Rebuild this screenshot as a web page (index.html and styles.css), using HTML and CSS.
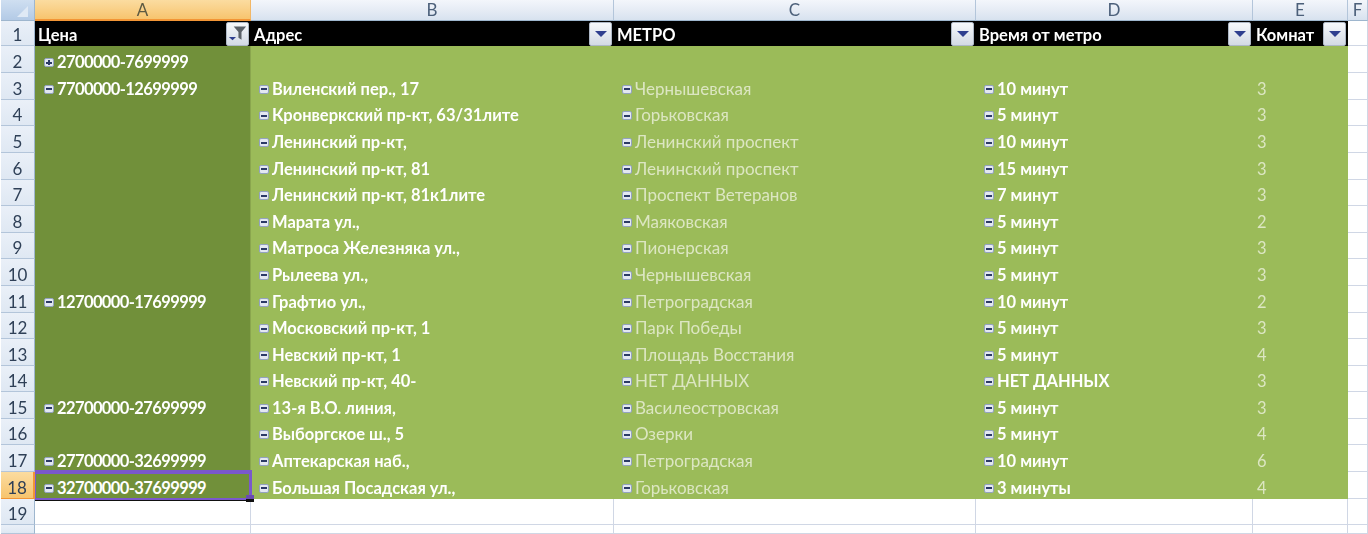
FILE: index.html
```html
<!DOCTYPE html>
<html lang="ru">
<head>
<meta charset="utf-8">
<title>Сводная таблица</title>
<link rel="stylesheet" href="styles.css">
</head>
<body>
<div class="sheet">
  <div class="corner"><span class="corner-mark"></span></div>
  <div class="col active">A</div><div class="col">B</div><div class="col">C</div><div class="col">D</div><div class="col">E</div><div class="col">F</div>

  <div class="rownum">1</div>
  <div class="head"><span>Цена</span><button class="filter"><svg viewBox="0 0 22 23" width="22" height="23"><path d="M2 14h7.500l-3.750 3.500z" fill="#2f3f8f"/><path d="M7 3h13l-4.800 5.800v8.200l-3.200-2v-6.200z" fill="#5a6068"/></svg></button></div>
  <div class="head"><span>Адрес</span><button class="filter"><i class="arrow"></i></button></div>
  <div class="head"><span>МЕТРО</span><button class="filter"><i class="arrow"></i></button></div>
  <div class="head"><span>Время от метро</span><button class="filter"><i class="arrow"></i></button></div>
  <div class="head"><span>Комнат</span><button class="filter"><i class="arrow"></i></button></div>
  <div class="blank"></div>

  <div class="rownum">2</div>
  <div class="price"><i class="tog plus"></i>2700000-7699999</div><div class="addr"></div><div class="metro"></div><div class="time"></div><div class="rooms"></div><div class="blank"></div>

  <div class="rownum">3</div>
  <div class="price"><i class="tog"></i>7700000-12699999</div><div class="addr"><i class="tog"></i>Виленский пер., 17</div><div class="metro"><i class="tog"></i>Чернышевская</div><div class="time"><i class="tog"></i>10 минут</div><div class="rooms">3</div><div class="blank"></div>

  <div class="rownum">4</div>
  <div class="price"></div><div class="addr"><i class="tog"></i>Кронверкский пр-кт, 63/31лите</div><div class="metro"><i class="tog"></i>Горьковская</div><div class="time"><i class="tog"></i>5 минут</div><div class="rooms">3</div><div class="blank"></div>

  <div class="rownum">5</div>
  <div class="price"></div><div class="addr"><i class="tog"></i>Ленинский пр-кт,</div><div class="metro"><i class="tog"></i>Ленинский проспект</div><div class="time"><i class="tog"></i>10 минут</div><div class="rooms">3</div><div class="blank"></div>

  <div class="rownum">6</div>
  <div class="price"></div><div class="addr"><i class="tog"></i>Ленинский пр-кт, 81</div><div class="metro"><i class="tog"></i>Ленинский проспект</div><div class="time"><i class="tog"></i>15 минут</div><div class="rooms">3</div><div class="blank"></div>

  <div class="rownum">7</div>
  <div class="price"></div><div class="addr"><i class="tog"></i>Ленинский пр-кт, 81к1лите</div><div class="metro"><i class="tog"></i>Проспект Ветеранов</div><div class="time"><i class="tog"></i>7 минут</div><div class="rooms">3</div><div class="blank"></div>

  <div class="rownum">8</div>
  <div class="price"></div><div class="addr"><i class="tog"></i>Марата ул.,</div><div class="metro"><i class="tog"></i>Маяковская</div><div class="time"><i class="tog"></i>5 минут</div><div class="rooms">2</div><div class="blank"></div>

  <div class="rownum">9</div>
  <div class="price"></div><div class="addr"><i class="tog"></i>Матроса Железняка ул.,</div><div class="metro"><i class="tog"></i>Пионерская</div><div class="time"><i class="tog"></i>5 минут</div><div class="rooms">3</div><div class="blank"></div>

  <div class="rownum">10</div>
  <div class="price"></div><div class="addr"><i class="tog"></i>Рылеева ул.,</div><div class="metro"><i class="tog"></i>Чернышевская</div><div class="time"><i class="tog"></i>5 минут</div><div class="rooms">3</div><div class="blank"></div>

  <div class="rownum">11</div>
  <div class="price"><i class="tog"></i>12700000-17699999</div><div class="addr"><i class="tog"></i>Графтио ул.,</div><div class="metro"><i class="tog"></i>Петроградская</div><div class="time"><i class="tog"></i>10 минут</div><div class="rooms">2</div><div class="blank"></div>

  <div class="rownum">12</div>
  <div class="price"></div><div class="addr"><i class="tog"></i>Московский пр-кт, 1</div><div class="metro"><i class="tog"></i>Парк Победы</div><div class="time"><i class="tog"></i>5 минут</div><div class="rooms">3</div><div class="blank"></div>

  <div class="rownum">13</div>
  <div class="price"></div><div class="addr"><i class="tog"></i>Невский пр-кт, 1</div><div class="metro"><i class="tog"></i>Площадь Восстания</div><div class="time"><i class="tog"></i>5 минут</div><div class="rooms">4</div><div class="blank"></div>

  <div class="rownum">14</div>
  <div class="price"></div><div class="addr"><i class="tog"></i>Невский пр-кт, 40-</div><div class="metro"><i class="tog"></i>НЕТ ДАННЫХ</div><div class="time"><i class="tog"></i>НЕТ ДАННЫХ</div><div class="rooms">3</div><div class="blank"></div>

  <div class="rownum">15</div>
  <div class="price"><i class="tog"></i>22700000-27699999</div><div class="addr"><i class="tog"></i>13-я В.О. линия,</div><div class="metro"><i class="tog"></i>Василеостровская</div><div class="time"><i class="tog"></i>5 минут</div><div class="rooms">3</div><div class="blank"></div>

  <div class="rownum">16</div>
  <div class="price"></div><div class="addr"><i class="tog"></i>Выборгское ш., 5</div><div class="metro"><i class="tog"></i>Озерки</div><div class="time"><i class="tog"></i>5 минут</div><div class="rooms">4</div><div class="blank"></div>

  <div class="rownum">17</div>
  <div class="price"><i class="tog"></i>27700000-32699999</div><div class="addr"><i class="tog"></i>Аптекарская наб.,</div><div class="metro"><i class="tog"></i>Петроградская</div><div class="time"><i class="tog"></i>10 минут</div><div class="rooms">6</div><div class="blank"></div>

  <div class="rownum active">18</div>
  <div class="price selected"><i class="tog"></i>32700000-37699999</div><div class="addr"><i class="tog"></i>Большая Посадская ул.,</div><div class="metro"><i class="tog"></i>Горьковская</div><div class="time"><i class="tog"></i>3 минуты</div><div class="rooms">4</div><div class="blank"></div>

  <div class="rownum">19</div>
  <div class="blank"></div><div class="blank"></div><div class="blank"></div><div class="blank"></div><div class="blank"></div><div class="blank"></div>

  <div class="rownum"></div>
  <div class="blank"></div><div class="blank"></div><div class="blank"></div><div class="blank"></div><div class="blank"></div><div class="blank"></div>
</div>
</body>
</html>
```
FILE: styles.css
```css
* { box-sizing: border-box; }
html, body { margin: 0; height: 534px; overflow: hidden; background: #fff; }
.sheet {
  display: grid;
  grid-template-columns: 35px 216px 363px 362px 277px 95px 20px;
  grid-template-rows: 21px 25px 27.3px repeat(17, 26.58px);
  font-family: Lato, "Open Sans", sans-serif;
  font-size: 16.5px;
  height: 534px;
  overflow: hidden;
  filter: blur(0.4px);
}
.corner {
  background: linear-gradient(#cfdff1, #b3cae6);
  border-right: 1px solid #9eb6ce;
  border-bottom: 1px solid #9eb6ce;
  margin-left: 1px;
  display: flex;
  align-items: flex-end;
  justify-content: flex-end;
  padding: 0 6px 3px 0;
}
.corner-mark { width: 0; height: 0; border-left: 11px solid transparent; border-bottom: 11px solid #dfe9f5; }
.col {
  background: linear-gradient(#f3f6fb 0%, #e6ecf5 50%, #d7e2ef 100%);
  border-right: 1px solid #b3c5da;
  border-bottom: 1px solid #9eb6ce;
  color: #4c607a;
  font-size: 17px;
  text-align: center;
  line-height: 20px;
}
.col.active {
  background: linear-gradient(#fbdca0 0%, #f9cf85 55%, #f7c46e 100%);
  border-bottom: 2px solid #f29536;
  border-right-color: #f2b766;
  color: #5d5a42;
}
.rownum {
  background: linear-gradient(#eaf0f8, #dfe8f3);
  border-right: 1px solid #9eb6ce;
  border-bottom: 1px solid #b3c5da;
  color: #2f4057;
  font-size: 17px;
  display: flex;
  align-items: flex-end;
  justify-content: center;
  margin-left: 1px;
}
.rownum.active {
  background: linear-gradient(#fbdca0, #f7c46e);
  border-right: 2px solid #f29536;
  border-bottom: 1px solid #f29536;
}
.head {
  background: #000;
  color: #fff;
  font-weight: 700;
  display: flex;
  align-items: flex-end;
  justify-content: space-between;
  padding: 0 2px 0 3px;
  white-space: nowrap;
  overflow: hidden;
}
.head span { line-height: 22px; }
.filter {
  width: 23px;
  height: 24px;
  margin: 0;
  padding: 0;
  flex: none;
  border: 1px solid #aeb8c6;
  border-radius: 2px;
  background: linear-gradient(#f6f8fb, #d3dae5);
  display: flex;
  align-items: center;
  justify-content: center;
}
.arrow { width: 0; height: 0; border-left: 6px solid transparent; border-right: 6px solid transparent; border-top: 6px solid #2f3f8f; }
.price, .addr, .metro, .time, .rooms {
  display: flex;
  align-items: flex-end;
  padding-bottom: 1px;
  white-space: nowrap;
  line-height: 20px;
}
.price { background: #71903a; color: #fff; font-weight: 700; padding-left: 9px; border-right: 1px solid #8aa64e; letter-spacing: -0.6px; }
.addr, .time { background: #9bbb59; color: #fff; font-weight: 700; padding-left: 8px; }
.metro { background: #9bbb59; color: #dce6c2; padding-left: 8px; font-size: 17px; }
.rooms { background: #9bbb59; color: #dce6c2; padding-left: 4px; }
.blank { border-right: 1px solid #d0d7e5; border-bottom: 1px solid #d0d7e5; background: #fff; }
.tog {
  position: relative;
  flex: none;
  width: 10px;
  height: 9px;
  margin: 0 3px 5px 0;
  background: #e3e8f1;
  border: 1px solid #93a2bf;
  border-radius: 2px;
}
.tog::before { content: ""; position: absolute; left: 1px; right: 1px; top: 2.500px; height: 2px; background: #2b3a66; }
.tog.plus::after { content: ""; position: absolute; top: 1px; bottom: 1px; left: 3px; width: 2px; background: #2b3a66; }
.selected { position: relative; overflow: visible; }
.selected::after {
  content: "";
  position: absolute;
  inset: -2px -2px -1px 0;
  border-style: solid;
  border-color: #7a58cc;
  border-width: 4px 3px 2px 1px;
  box-shadow: 0 1px 0 #111;
  pointer-events: none;
}
.selected::before {
  content: "";
  position: absolute;
  right: -4px;
  bottom: -3px;
  width: 8px;
  height: 7px;
  background: linear-gradient(#6a4cb0 50%, #111 50%);
  z-index: 1;
}
```
